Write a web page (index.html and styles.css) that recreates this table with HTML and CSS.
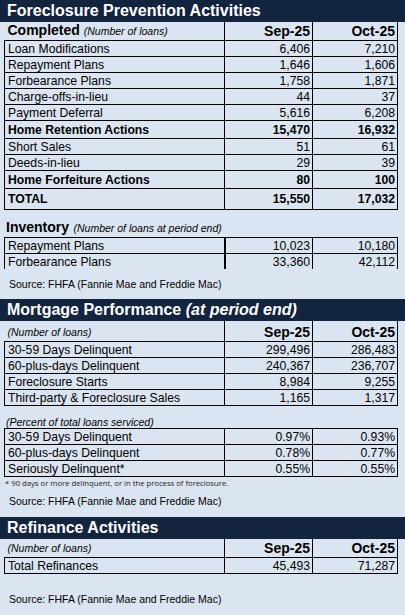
FILE: index.html
```html
<!DOCTYPE html>
<html lang="en">
<head>
    <meta charset="UTF-8">
    <meta name="viewport" content="width=device-width, initial-scale=1.0">
    <title>Foreclosure Prevention Activities</title>
    <link rel="stylesheet" href="styles.css">
</head>
<body>

    <!-- Foreclosure prevention -->
    <div class="bar">Foreclosure Prevention Activities</div>
    <table class="grid">
        <colgroup><col class="c1"><col class="c2"><col class="c3"></colgroup>
        <tr class="head">
            <td><span class="caption">Completed</span> <span class="note">(Number of loans)</span></td>
            <td>Sep-25</td>
            <td>Oct-25</td>
        </tr>
        <tr><td>Loan Modifications</td><td>6,406</td><td>7,210</td></tr>
        <tr><td>Repayment Plans</td><td>1,646</td><td>1,606</td></tr>
        <tr><td>Forbearance Plans</td><td>1,758</td><td>1,871</td></tr>
        <tr><td>Charge-offs-in-lieu</td><td>44</td><td>37</td></tr>
        <tr><td>Payment Deferral</td><td>5,616</td><td>6,208</td></tr>
        <tr class="sum"><td>Home Retention Actions</td><td>15,470</td><td>16,932</td></tr>
        <tr><td>Short Sales</td><td>51</td><td>61</td></tr>
        <tr><td>Deeds-in-lieu</td><td>29</td><td>39</td></tr>
        <tr class="sum"><td>Home Forfeiture Actions</td><td>80</td><td>100</td></tr>
        <tr class="sum total"><td>TOTAL</td><td>15,550</td><td>17,032</td></tr>
    </table>

    <div class="subhead"><span class="caption">Inventory</span> <span class="note">(Number of loans at period end)</span></div>
    <table class="grid inventory">
        <colgroup><col class="c1"><col class="c2"><col class="c3"></colgroup>
        <tr><td>Repayment Plans</td><td>10,023</td><td>10,180</td></tr>
        <tr><td>Forbearance Plans</td><td>33,360</td><td>42,112</td></tr>
    </table>

    <p class="source">Source: FHFA (Fannie Mae and Freddie Mac)</p>

    <!-- Mortgage performance -->
    <div class="bar">Mortgage Performance <i>(at period end)</i></div>
    <table class="grid">
        <colgroup><col class="c1"><col class="c2"><col class="c3"></colgroup>
        <tr class="head tall">
            <td><span class="note">(Number of loans)</span></td>
            <td>Sep-25</td>
            <td>Oct-25</td>
        </tr>
        <tr><td>30-59 Days Delinquent</td><td>299,496</td><td>286,483</td></tr>
        <tr><td>60-plus-days Delinquent</td><td>240,367</td><td>236,707</td></tr>
        <tr><td>Foreclosure Starts</td><td>8,984</td><td>9,255</td></tr>
        <tr><td>Third-party &amp; Foreclosure Sales</td><td>1,165</td><td>1,317</td></tr>
    </table>

    <div class="subhead small"><span class="note">(Percent of total loans serviced)</span></div>
    <table class="grid">
        <colgroup><col class="c1"><col class="c2"><col class="c3"></colgroup>
        <tr><td>30-59 Days Delinquent</td><td>0.97%</td><td>0.93%</td></tr>
        <tr><td>60-plus-days Delinquent</td><td>0.78%</td><td>0.77%</td></tr>
        <tr><td>Seriously Delinquent*</td><td>0.55%</td><td>0.55%</td></tr>
    </table>
    <p class="footnote">* 90 days or more delinquent, or in the process of foreclosure.</p>

    <p class="source mid">Source: FHFA (Fannie Mae and Freddie Mac)</p>

    <!-- Refinance -->
    <div class="bar">Refinance Activities</div>
    <table class="grid">
        <colgroup><col class="c1"><col class="c2"><col class="c3"></colgroup>
        <tr class="head">
            <td><span class="note">(Number of loans)</span></td>
            <td>Sep-25</td>
            <td>Oct-25</td>
        </tr>
        <tr><td>Total Refinances</td><td>45,493</td><td>71,287</td></tr>
    </table>

    <p class="source last">Source: FHFA (Fannie Mae and Freddie Mac)</p>

</body>
</html>
```

FILE: styles.css
```css
body {
    margin: 0;
    background-color: #dbe5f1;
    font-family: "Liberation Sans", Arial, sans-serif;
    color: #000;
}

.bar {
    background-color: #13243f;
    color: #fff;
    font-weight: bold;
    font-size: 16px;
    height: 22px;
    line-height: 22px;
    padding-left: 7px;
}

.grid {
    border-collapse: collapse;
    table-layout: fixed;
    width: 393px;
    margin-left: 4px;
    font-size: 12.2px;
}

.grid .c1 { width: 220px; }
.grid .c2 { width: 88px; }
.grid .c3 { width: 85px; }

.grid td {
    border: 1px solid #000;
    height: 15px;
    padding: 0 2px 0 3px;
    line-height: 14px;
    text-align: right;
    white-space: nowrap;
}

.grid td:first-child {
    text-align: left;
}

.head td {
    border-top: none;
    height: 18px;
    font-weight: bold;
    font-size: 14px;
    vertical-align: bottom;
    line-height: 17px;
}

.head.tall td {
    height: 20px;
}

.head td:first-child {
    border-left: none;
    font-weight: normal;
}

.sum td {
    font-weight: bold;
    height: 17px;
}

.total td {
    height: 20px;
}

.caption {
    font-weight: bold;
    font-size: 14px;
}

.note {
    font-style: italic;
    font-size: 10.5px;
}

.subhead {
    margin: 8px 0 0 6px;
    height: 19px;
    line-height: 18px;
}

.subhead.small {
    margin-top: 7px;
    height: 15px;
    line-height: 15px;
}

.inventory tr:last-child td {
    border-bottom: none;
    height: 15px;
}

.inventory td:nth-child(2) {
    border-left-width: 2px;
}

.source {
    margin: 0;
    padding: 8px 0 0 9px;
    height: 22px;
    font-size: 10.5px;
    line-height: 14px;
}

.source.mid {
    padding-top: 5px;
    height: 23px;
}

.source.last {
    padding-top: 18px;
}

.footnote {
    margin: 0;
    padding-left: 5px;
    height: 12px;
    font-family: "Open Sans", sans-serif;
    font-size: 7.7px;
    line-height: 12px;
    color: #222;
}
```
